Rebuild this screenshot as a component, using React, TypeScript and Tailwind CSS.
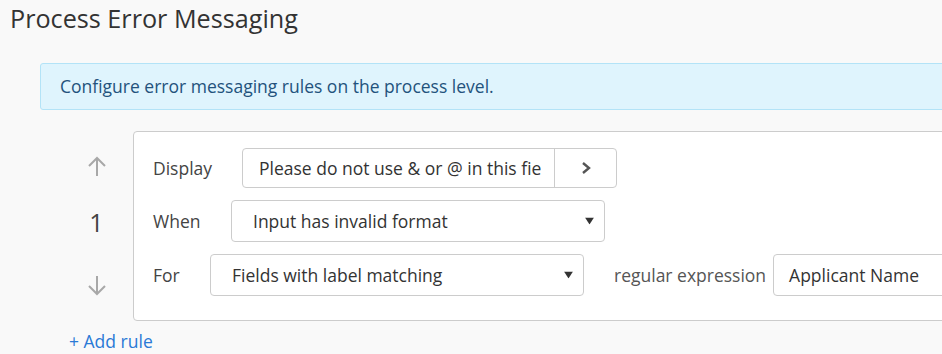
function ArrowUp() {
  return (
    <svg width="22" height="22" viewBox="0 0 22 22" fill="none" stroke="#a8a8a8" strokeWidth="2">
      <path d="M11 21V3" />
      <path d="M3 11l8-8 8 8" />
    </svg>
  );
}

function ArrowDown() {
  return (
    <svg width="22" height="22" viewBox="0 0 22 22" fill="none" stroke="#a8a8a8" strokeWidth="2">
      <path d="M11 1v18" />
      <path d="M3 11l8 8 8-8" />
    </svg>
  );
}

function Caret() {
  return (
    <svg width="9" height="7" viewBox="0 0 9 7" className="absolute right-[10px] top-1/2 -translate-y-1/2">
      <path d="M0 0h9L4.5 7z" fill="#333" />
    </svg>
  );
}

function Select({ value, width }: { value: string; width: string }) {
  return (
    <div className={`relative h-[42px] shrink-0 ${width} rounded-[4px] border border-[#ccc] bg-white pl-[21px] flex items-center text-[#333]`}>
      {value}
      <Caret />
    </div>
  );
}

export default function App() {
  return (
    <div className="h-[354px] w-full overflow-hidden bg-[#f9f9f9] font-['Open_Sans',sans-serif] text-[17.5px]">
      <h1 className="pl-[10px] pt-[1px] text-[25.2px] leading-[34px] text-[#333] whitespace-nowrap">Process Error Messaging</h1>

      <div className="ml-[40px] mt-[28px] h-[47px] w-[960px] rounded-[3px] border border-[#b3e3f7] bg-[#dff4fd] pl-[19px] flex items-center text-[#23527c] whitespace-nowrap">
        Configure error messaging rules on the process level.
      </div>

      <div className="ml-[60px] mt-[21px] flex">
        <div className="w-[73px] shrink-0 flex flex-col items-center pt-[24px]">
          <ArrowUp />
          <div className="mt-[28px] text-[25px] leading-[34px] text-[#444]">1</div>
          <div className="mt-[36px]">
            <ArrowDown />
          </div>
        </div>

        <div className="h-[190px] w-[900px] shrink-0 rounded-[4px] border border-[#ccc] bg-white pl-[19px] pt-[16px] flex flex-col gap-[12px] text-[#444] whitespace-nowrap">
          <div className="flex items-center">
            <span className="w-[89px] shrink-0">Display</span>
            <div className="flex h-[40px] shrink-0 rounded-[4px] border border-[#ccc]">
              <div className="w-[311px] overflow-hidden pl-[16px] pr-[13px] flex items-center text-[#333]">
                <span className="overflow-hidden">Please do not use &amp; or @ in this field</span>
              </div>
              <div className="w-[62px] border-l border-[#ccc] flex items-center justify-center">
                <svg width="10" height="12" viewBox="0 0 10 12" fill="none" stroke="#555" strokeWidth="2.4">
                  <path d="M2 1l6 5-6 5" />
                </svg>
              </div>
            </div>
          </div>

          <div className="flex items-center">
            <span className="w-[78px] shrink-0">When</span>
            <Select value="Input has invalid format" width="w-[374px]" />
          </div>

          <div className="flex items-center">
            <span className="w-[57px] shrink-0">For</span>
            <Select value="Fields with label matching" width="w-[374px]" />
            <span className="ml-[30px] shrink-0 text-[#555]">regular expression</span>
            <div className="ml-[7px] h-[42px] w-[200px] shrink-0 rounded-[4px] border border-[#ccc] pl-[15px] flex items-center text-[#333]">
              Applicant Name
            </div>
          </div>
        </div>
      </div>

      <div className="ml-[69px] mt-[7px] text-[#2a7ad6]">+ Add rule</div>
    </div>
  );
}
